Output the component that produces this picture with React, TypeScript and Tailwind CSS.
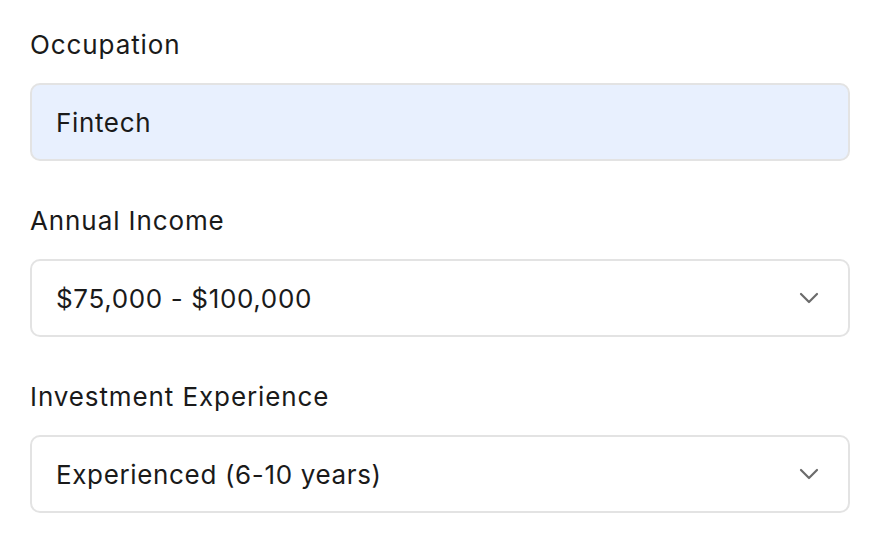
import { useState } from "react";

const incomeOptions = ["$50,000 - $75,000", "$75,000 - $100,000", "$100,000 - $150,000"];
const experienceOptions = ["Beginner (0-2 years)", "Intermediate (3-5 years)", "Experienced (6-10 years)"];

function Chevron() {
  return (
    <svg width="20" height="12" viewBox="0 0 20 12" fill="none" className="shrink-0">
      <path d="M2 2l8 8 8-8" stroke="#6b6b6b" strokeWidth="2.2" strokeLinecap="round" strokeLinejoin="round" />
    </svg>
  );
}

function SelectField({ label, value, options, onChange }: { label: string; value: string; options: string[]; onChange: (v: string) => void }) {
  return (
    <div className="mt-10">
      <label className="block text-[26px] leading-[40px] tracking-[0.9px] text-[#1a1a1a] mb-[18px]">{label}</label>
      <div className="relative">
        <select
          value={value}
          onChange={(e) => onChange(e.target.value)}
          className="w-full h-[78px] appearance-none rounded-[10px] border-2 border-[#e3e3e3] bg-white pl-6 pr-16 text-[26px] tracking-[0.65px] text-[#1a1a1a] outline-none"
        >
          {options.map((o) => (
            <option key={o} value={o}>{o}</option>
          ))}
        </select>
        <div className="pointer-events-none absolute right-[31px] top-1/2 -translate-y-1/2 flex">
          <Chevron />
        </div>
      </div>
    </div>
  );
}

export default function App() {
  const [occupation, setOccupation] = useState("Fintech");
  const [income, setIncome] = useState(incomeOptions[1]);
  const [experience, setExperience] = useState(experienceOptions[2]);

  return (
    <div className="min-h-[538px] bg-white pt-[25px] pl-[30px] pr-[30px]" style={{ fontFamily: "Inter, 'Noto Sans', sans-serif" }}>
      <div>
        <label className="block text-[26px] leading-[40px] tracking-[0.9px] text-[#1a1a1a] mb-[18px]">Occupation</label>
        <input
          value={occupation}
          onChange={(e) => setOccupation(e.target.value)}
          className="w-full h-[78px] rounded-[10px] border-2 border-[#e3e3e3] bg-[#e8f0fe] px-6 text-[26px] tracking-[0.65px] text-[#1a1a1a] outline-none"
        />
      </div>
      <SelectField label="Annual Income" value={income} options={incomeOptions} onChange={setIncome} />
      <SelectField label="Investment Experience" value={experience} options={experienceOptions} onChange={setExperience} />
    </div>
  );
}
